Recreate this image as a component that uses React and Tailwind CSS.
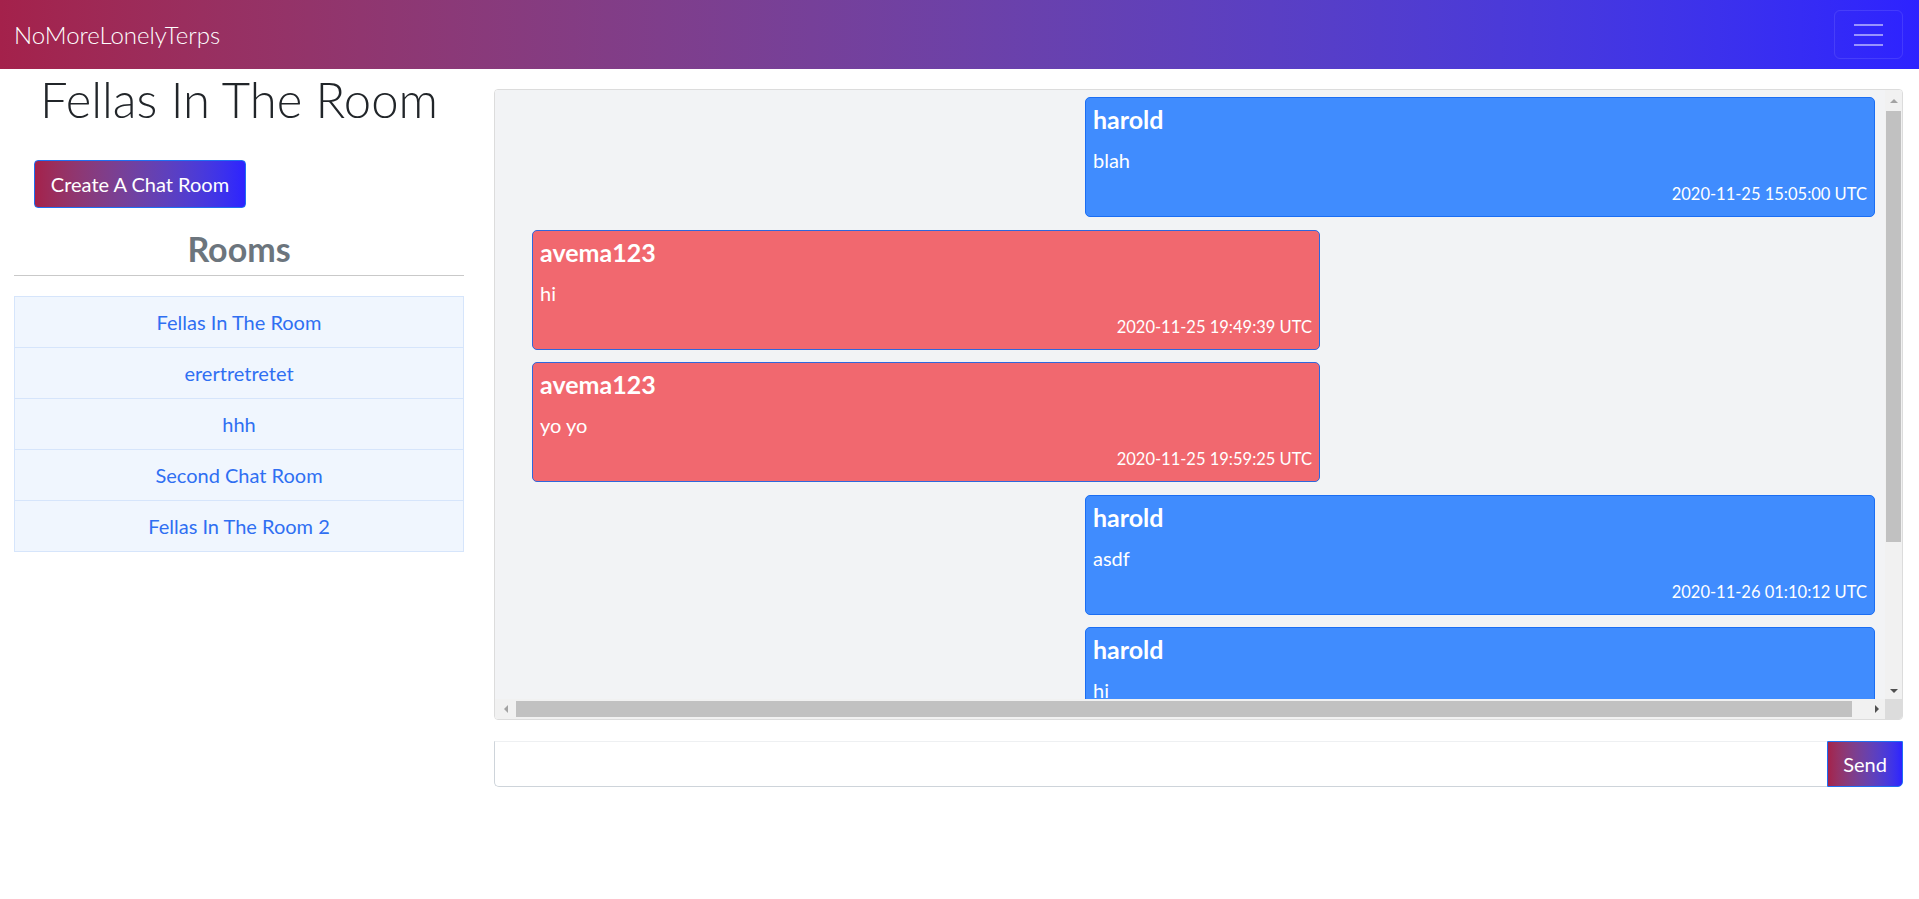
import React from 'react';

const rooms = ['Fellas In The Room', 'erertretretet', 'hhh', 'Second Chat Room', 'Fellas In The Room 2'];

const messages = [
    { user: 'harold', text: 'blah', time: '2020-11-25 15:05:00 UTC', mine: true },
    { user: 'avema123', text: 'hi', time: '2020-11-25 19:49:39 UTC', mine: false },
    { user: 'avema123', text: 'yo yo', time: '2020-11-25 19:59:25 UTC', mine: false },
    { user: 'harold', text: 'asdf', time: '2020-11-26 01:10:12 UTC', mine: true },
    { user: 'harold', text: 'hi', time: '2020-11-26 01:12:40 UTC', mine: true },
];

const Message = ({ msg }) => (
    <div
        className={
            msg.mine
                ? 'ml-auto mr-[10px] w-[790px] h-[120px] shrink-0 flex flex-col rounded-[5px] border border-[#1b6ef3] bg-[#408cfe] px-[7px] pt-[6px] pb-[11px] text-white'
                : 'ml-[37px] w-[788px] h-[120px] shrink-0 flex flex-col rounded-[5px] border border-[#2f67dc] bg-[#f1686f] px-[7px] pt-[6px] pb-[11px] text-white'
        }
    >
        <div className="text-[25px] font-bold leading-[1.2]">{msg.user}</div>
        <div className="mt-[14px] text-[20px] leading-[1.2]">{msg.text}</div>
        <div className="mt-auto text-right text-[16.5px] leading-[1.2]">{msg.time}</div>
    </div>
);

const Arrow = ({ dir, dark }) => {
    const color = dark ? 'border-[#505050]' : 'border-[#a3a3a3]';
    if (dir === 'up') return <div className={`w-0 h-0 border-x-[4px] border-x-transparent border-b-[4px] ${color}`} />;
    if (dir === 'down') return <div className={`w-0 h-0 border-x-[4px] border-x-transparent border-t-[4px] ${color}`} />;
    if (dir === 'left') return <div className={`w-0 h-0 border-y-[4px] border-y-transparent border-r-[4px] ${color}`} />;
    return <div className={`w-0 h-0 border-y-[4px] border-y-transparent border-l-[4px] ${color}`} />;
};

export default function App() {
    return (
        <div className="min-h-screen bg-white text-[#212529]" style={{ fontFamily: 'Lato, "Open Sans", sans-serif' }}>
            <nav className="h-[69px] flex items-center justify-between pl-[14px] pr-[16px] bg-gradient-to-r from-[#a4214b] to-[#2d22ff]">
                <span className="text-[24px] font-light text-white">NoMoreLonelyTerps</span>
                <button className="w-[69px] h-[49px] rounded-[6px] border border-white/10 flex flex-col items-center justify-center gap-[8px]">
                    <span className="block w-[29px] h-[2px] bg-white/50" />
                    <span className="block w-[29px] h-[2px] bg-white/50" />
                    <span className="block w-[29px] h-[2px] bg-white/50" />
                </button>
            </nav>

            <div className="flex">
                <aside className="w-[478px] shrink-0 px-[14px]">
                    <h1 className="mt-[1px] text-center text-[49px] font-light leading-[1.2]">Fellas In The Room</h1>
                    <button className="mt-[31px] ml-[20px] w-[212px] h-[48px] rounded-[4px] border border-[#1f6ff2] bg-gradient-to-r from-[#a4214b] to-[#2d22ff] text-[20px] text-white">
                        Create A Chat Room
                    </button>
                    <h2 className="mt-[21px] pb-[5px] border-b border-[#c9c9c9] text-center text-[34px] font-bold leading-[1.2] text-[#6c757d]">
                        Rooms
                    </h2>
                    <ul className="mt-[20px] border border-[#d6e5fb] divide-y divide-[#d6e5fb] bg-[#f0f6fe]">
                        {rooms.map((room) => (
                            <li key={room} className="py-[12px] leading-[26px] text-center text-[20px] text-[#2f6ff2]">
                                {room}
                            </li>
                        ))}
                    </ul>
                </aside>

                <main className="flex-1 min-w-0 pl-[16px] pr-[16px] pt-[20px]">
                    <div className="h-[631px] flex flex-col overflow-hidden rounded-[4px] border border-[#dcdcdc]">
                        <div className="flex-1 min-h-0 flex">
                            <div className="flex-1 min-w-0 overflow-hidden bg-[#f2f3f5] pt-[7px] flex flex-col gap-[12.5px]">
                                {messages.map((msg, i) => (
                                    <Message key={i} msg={msg} />
                                ))}
                            </div>
                            <div className="w-[17px] shrink-0 flex flex-col bg-[#f1f1f1]">
                                <div className="h-[21px] flex items-center justify-center">
                                    <Arrow dir="up" />
                                </div>
                                <div className="h-[431px] mx-px bg-[#c1c1c1]" />
                                <div className="flex-1" />
                                <div className="h-[17px] flex items-center justify-center">
                                    <Arrow dir="down" dark />
                                </div>
                            </div>
                        </div>
                        <div className="h-[20px] shrink-0 flex bg-[#f1f1f1]">
                            <div className="w-[21px] flex items-center justify-center">
                                <Arrow dir="left" />
                            </div>
                            <div className="flex-1 my-[2px] bg-[#c1c1c1]" />
                            <div className="w-[16px]" />
                            <div className="w-[17px] flex items-center justify-center">
                                <Arrow dir="right" dark />
                            </div>
                            <div className="w-[17px] bg-[#dcdcdc]" />
                        </div>
                    </div>

                    <div className="mt-[21px] h-[46px] flex">
                        <input className="flex-1 min-w-0 border-l border-b border-t border-t-[#eef0f2] border-[#ced4da] rounded-bl-[5px] bg-white px-3 text-[20px] outline-none" />
                        <button className="w-[76px] rounded-br-[5px] border border-[#1f6ff2] bg-gradient-to-r from-[#a4214b] to-[#2d22ff] text-[20px] text-white">
                            Send
                        </button>
                    </div>
                </main>
            </div>
        </div>
    );
}
